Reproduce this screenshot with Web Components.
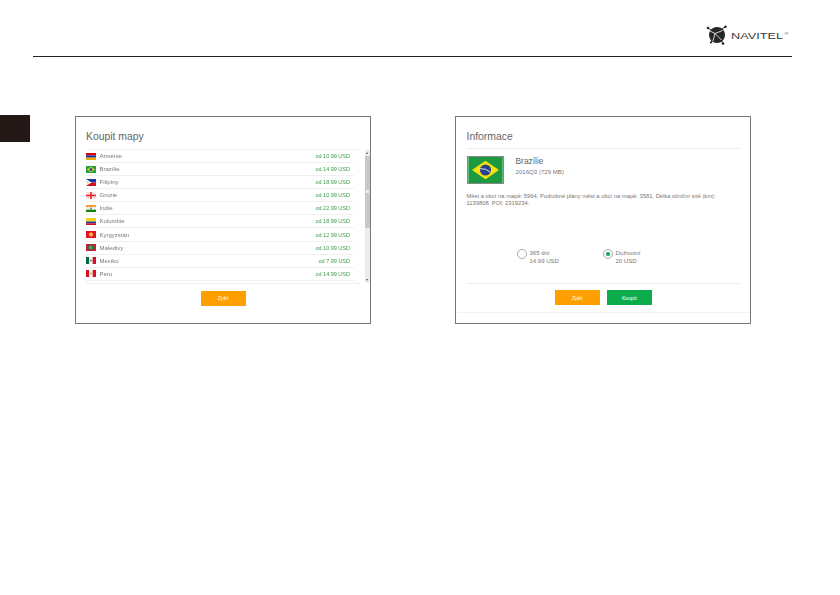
<!DOCTYPE html>
<html>
<head>
<meta charset="utf-8">
<style>
html, body { margin: 0; padding: 0; background: #fff; }
body { font-family: "Liberation Sans", Arial, sans-serif; width: 840px; height: 595px; overflow: hidden; }
</style>
</head>
<body>
<manual-page>
  <map-list-panel slot="left" heading="Koupit mapy">
    <map-row name="Arménie" price="od 10.99 USD" flag="am"></map-row>
    <map-row name="Brazílie" price="od 14.99 USD" flag="br"></map-row>
    <map-row name="Filipíny" price="od 18.99 USD" flag="ph"></map-row>
    <map-row name="Gruzie" price="od 10.99 USD" flag="ge"></map-row>
    <map-row name="Indie" price="od 22.99 USD" flag="in"></map-row>
    <map-row name="Kolumbie" price="od 18.99 USD" flag="co"></map-row>
    <map-row name="Kyrgyzstán" price="od 12.99 USD" flag="kg"></map-row>
    <map-row name="Maledivy" price="od 10.99 USD" flag="mv"></map-row>
    <map-row name="Mexiko" price="od 7.99 USD" flag="mx"></map-row>
    <map-row name="Peru" price="od 14.99 USD" flag="pe"></map-row>
  </map-list-panel>
  <map-info-panel slot="right" heading="Informace"></map-info-panel>
</manual-page>

<script>
const FLAGS = {
  am: '<rect width="20" height="4.7" fill="#d90012"/><rect y="4.7" width="20" height="4.6" fill="#1a2f9a"/><rect y="9.3" width="20" height="4.7" fill="#f2a800"/>',
  br: '<rect width="20" height="14" fill="#229e45"/><path d="M10 1.5 18 7 10 12.5 2 7Z" fill="#e8dc20"/><circle cx="10" cy="7" r="3.2" fill="#2b49a3"/>',
  ph: '<rect width="20" height="7" fill="#1038a8"/><rect y="7" width="20" height="7" fill="#ce1126"/><path d="M0 0 11 7 0 14Z" fill="#fff"/><circle cx="3.6" cy="7" r="1.8" fill="#f0c820"/>',
  ge: '<rect width="20" height="14" fill="#f2f2f2"/><rect x="8.5" width="3" height="14" fill="#f0141e"/><rect y="5.5" width="20" height="3" fill="#f0141e"/><path d="M3 3h3M4.500 1.500v3M14 3h3M15.500 1.500v3M3 11h3M4.500 9.500v3M14 11h3M15.500 9.500v3" stroke="#f0a0a0"/>',
  in: '<rect width="20" height="4.7" fill="#f49a3c"/><rect y="4.7" width="20" height="4.6" fill="#f4f4f4"/><rect y="9.3" width="20" height="4.7" fill="#138808"/><circle cx="10" cy="7" r="2" fill="#6a78aa"/>',
  co: '<rect width="20" height="7" fill="#fcd116"/><rect y="7" width="20" height="3.5" fill="#1f3f9a"/><rect y="10.5" width="20" height="3.5" fill="#ce1126"/>',
  kg: '<rect width="20" height="14" fill="#e8112d"/><circle cx="10" cy="7" r="4" fill="#ffd83a"/><circle cx="10" cy="7" r="1.6" fill="#ee8a3a"/>',
  mv: '<rect width="20" height="14" fill="#c8202f"/><rect x="3.5" y="3" width="13" height="8" fill="#1f7a3d"/><circle cx="10" cy="7" r="2.6" fill="#f2f2f2"/><circle cx="11" cy="7" r="2.3" fill="#1f7a3d"/>',
  mx: '<rect width="6.7" height="14" fill="#006847"/><rect x="6.7" width="6.6" height="14" fill="#f4f4f4"/><rect x="13.3" width="6.7" height="14" fill="#ce1126"/><circle cx="10" cy="7" r="2" fill="#8a7a4a"/>',
  pe: '<rect width="6.7" height="14" fill="#d91023"/><rect x="6.7" width="6.6" height="14" fill="#f6f6f6"/><rect x="13.3" width="6.7" height="14" fill="#d91023"/><circle cx="10" cy="7" r="2" fill="#c8a860"/>'
};

class MapRow extends HTMLElement {
  constructor() {
    super();
    this.attachShadow({mode: 'open'});
  }
  connectedCallback() {
    this.shadowRoot.innerHTML = `
<style>
:host { display: flex; align-items: center; height: 12.08px; padding-right: 4px; border-bottom: 1px solid #f0f0f0; font-size: 6px; color: #777; }
svg { width: 10px; height: 7px; margin-right: 3.5px; flex: none; }
.name { flex: 1; }
.price { color: #3a9c46; font-size: 5.5px; }
</style>
<svg viewBox="0 0 20 14" preserveAspectRatio="none">${FLAGS[this.getAttribute('flag')]}</svg>
<span class="name">${this.getAttribute('name')}</span>
<span class="price">${this.getAttribute('price')}</span>`;
  }
}
customElements.define('map-row', MapRow);

class ActionButton extends HTMLElement {
  constructor() {
    super();
    this.attachShadow({mode: 'open'}).innerHTML = `
<style>
:host { display: flex; align-items: center; justify-content: center; width: 45px; height: 15px; background: var(--btn, #ffa000); color: #fff; font-size: 5.2px; }
</style>
<slot></slot>`;
  }
}
customElements.define('action-button', ActionButton);

class MapListPanel extends HTMLElement {
  constructor() {
    super();
    this.attachShadow({mode: 'open'});
  }
  connectedCallback() {
    this.shadowRoot.innerHTML = `
<style>
:host { display: block; box-sizing: border-box; width: 296px; height: 208px; border: 1px solid #777; background: #fff; padding: 0 0 0 10px; position: relative; }
h2 { margin: 0; padding-top: 13px; height: 19px; font-weight: normal; font-size: 10.4px; line-height: 13px; color: #666; }
.rows { width: 268px; border-top: 1px solid #f3f3f3; padding-right: 6px; }
.track { position: absolute; right: 0; top: 33px; width: 5px; height: 133px; background: #ececec; }
.thumb { position: absolute; left: 0; top: 6px; width: 5px; height: 72px; background: #c8c8c8; }
.grip { position: absolute; left: 1px; top: 34px; width: 3px; height: 3px; background: #eee; }
.up, .down { position: absolute; left: 1px; width: 0; height: 0; border-left: 1.5px solid transparent; border-right: 1.5px solid transparent; }
.up { top: 2px; border-bottom: 2px solid #555; }
.down { bottom: 2px; border-top: 2px solid #555; }
.foot { width: 274px; border-top: 1px solid #eee; margin-top: 2px; padding-top: 7px; display: flex; justify-content: center; }
</style>
<h2>${this.getAttribute('heading')}</h2>
<div class="rows"><slot></slot></div>
<div class="track"><span class="up"></span><div class="thumb"><div class="grip"></div></div><span class="down"></span></div>
<div class="foot"><action-button>Zpět</action-button></div>`;
  }
}
customElements.define('map-list-panel', MapListPanel);

class MapInfoPanel extends HTMLElement {
  constructor() {
    super();
    this.attachShadow({mode: 'open'});
  }
  connectedCallback() {
    this.shadowRoot.innerHTML = `
<style>
:host { display: block; box-sizing: border-box; width: 296px; height: 208px; border: 1px solid #777; background: #fff; padding: 0 10px 0 10.5px; color: #777; }
h2 { margin: 0; padding: 13px 0 5px; font-weight: normal; font-size: 10.4px; line-height: 13px; color: #666; border-bottom: 1px solid #eee; }
.head { display: flex; margin-top: 7px; }
.head svg { width: 37px; height: 28px; border: 1px solid #888; box-sizing: border-box; flex: none; margin-right: 12px; }
.title { font-size: 8.4px; color: #666; line-height: 10px; }
.sub { font-size: 6.1px; line-height: 9px; margin-top: 1px; }
p { margin: 9px 0 0; font-size: 5.8px; line-height: 7px; width: 255px; }
.opts { display: flex; margin: 42px 0 0 50px; height: 34px; }
.opt { display: flex; font-size: 6px; line-height: 8.4px; width: 86px; }
.radio { width: 8px; height: 8px; border: 1px solid #aaa; border-radius: 50%; margin: 0 3px 0 0; position: relative; flex: none; }
.on::after { content: ""; position: absolute; left: 2px; top: 2px; width: 4px; height: 4px; border-radius: 50%; background: #0aa84a; }
.line { height: 1px; background: #eee; }
.foot { display: flex; justify-content: center; gap: 7px; padding: 6px 0 7px; height: 15px; border-bottom: 1px solid #f2f2f2; margin: 0 -10px; }
.buy { --btn: #0aad4a; }
</style>
<h2>${this.getAttribute('heading')}</h2>
<div class="head">
  <svg viewBox="0 0 37 28"><rect width="37" height="28" fill="#1d9a3f"/><path d="M18.5 4 33 14 18.5 24 4 14Z" fill="#f6e20e"/><circle cx="18.5" cy="14" r="6" fill="#27408f"/><path d="M12.7 12.5Q19 12 24 16.5" stroke="#eee" stroke-width="1" fill="none"/></svg>
  <div><div class="title">Brazílie</div><div class="sub">2016Q3 (729 MB)</div></div>
</div>
<p>Měst a obcí na mapě: 5964, Podrobné plány měst a obcí na mapě: 3581, Délka silniční sítě (km): 1139808, POI: 2319234.</p>
<div class="opts">
  <div class="opt"><span class="radio"></span><span>365 dní<br>14.99 USD</span></div>
  <div class="opt"><span class="radio on"></span><span>Doživotní<br>20 USD</span></div>
</div>
<div class="line"></div>
<div class="foot"><action-button>Zpět</action-button><action-button class="buy">Koupit</action-button></div>`;
  }
}
customElements.define('map-info-panel', MapInfoPanel);

class NavitelLogo extends HTMLElement {
  constructor() {
    super();
    this.attachShadow({mode: 'open'}).innerHTML = `
<style>
:host { display: flex; align-items: center; color: #3a3a3a; }
svg { width: 24px; height: 22px; flex: none; }
span { font-size: 8.2px; margin: 2px 0 0 2px; transform: scaleX(1.55); transform-origin: left; width: 61px; white-space: nowrap; }
sup { font-size: 3.5px; line-height: 0; margin-left: 1px; vertical-align: 4px; }
</style>
<svg viewBox="0 0 24 22">
  <circle cx="12" cy="11" r="8" fill="#262626"/>
  <path d="M3 4 10 9 20 3M10 9 6 18M10 9 18 19" stroke="#262626" stroke-width="1" fill="none"/>
  <path d="M5 7 10 9.500 17.500 6.500M10 9.500 8 17M10 9.500 16.500 16" stroke="#fff" stroke-width=".8" fill="none"/>
  <circle cx="3" cy="4" r="1.300" fill="#262626"/><circle cx="20.500" cy="2.800" r="1.300" fill="#262626"/><circle cx="18" cy="19.500" r="1.300" fill="#262626"/><circle cx="6" cy="18.500" r="1.100" fill="#262626"/>
</svg>
<span>NAVITEL<sup>®</sup></span>`;
  }
}
customElements.define('navitel-logo', NavitelLogo);

class ManualPage extends HTMLElement {
  constructor() {
    super();
    this.attachShadow({mode: 'open'}).innerHTML = `
<style>
:host { display: block; width: 840px; height: 595px; }
header { display: flex; justify-content: flex-end; align-items: flex-end; box-sizing: border-box; height: 57px; margin: 0 48px 0 33px; border-bottom: 1px solid #222; padding-bottom: 10px; }
main { display: flex; margin-top: 58px; align-items: flex-start; }
.tab { width: 30px; height: 27px; background: #231815; margin-right: 45px; }
.gap { width: 84px; }
.shots { display: flex; filter: blur(0.35px); margin-top: 1px; }
</style>
<header><navitel-logo></navitel-logo></header>
<main>
  <div class="tab"></div>
  <div class="shots"><slot name="left"></slot><div class="gap"></div><slot name="right"></slot></div>
</main>`;
  }
}
customElements.define('manual-page', ManualPage);
</script>
</body>
</html>
